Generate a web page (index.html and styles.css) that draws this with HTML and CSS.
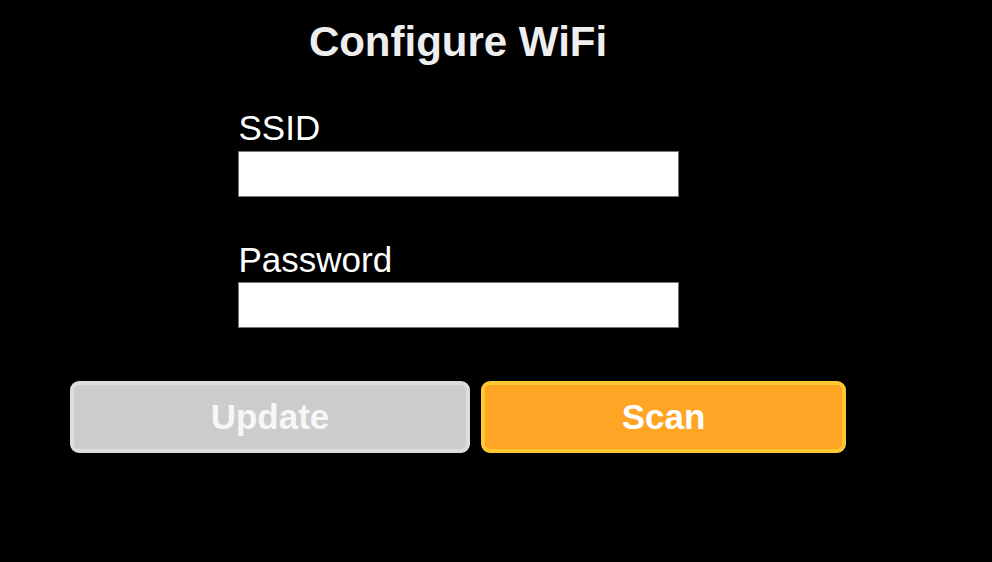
FILE: index.html
```html
<!DOCTYPE html>
<html lang="en">
<head>
<meta charset="utf-8">
<title>Configure WiFi</title>
<link rel="stylesheet" href="styles.css">
</head>
<body>
<main class="page">
  <h1 class="title">Configure WiFi</h1>
  <div class="field field-first">
    <label class="label" for="ssid">SSID</label>
    <input class="input input-ssid" id="ssid" type="text">
  </div>
  <div class="field field-second">
    <label class="label" for="pw">Password</label>
    <input class="input input-pw" id="pw" type="password">
  </div>
  <div class="actions">
    <button class="btn btn-update" type="button">Update</button>
    <button class="btn btn-scan" type="button">Scan</button>
  </div>
</main>
</body>
</html>
```

FILE: styles.css
```css
html, body {
  margin: 0;
  padding: 0;
  background: #000;
}
body {
  width: 992px;
  height: 562px;
  overflow: hidden;
  font-family: "Liberation Sans", Arial, sans-serif;
}
.page {
  width: 916px;
  display: flex;
  flex-direction: column;
  align-items: center;
  padding-top: 18px;
}
.title {
  margin: 0;
  font-size: 42px;
  line-height: 48px;
  font-weight: 700;
  color: #eeeeee;
}
.field {
  display: flex;
  flex-direction: column;
  width: 441px;
}
.field-first { margin-top: 42px; }
.field-second { margin-top: 43px; }
.label {
  font-size: 35px;
  line-height: 40px;
  color: #ffffff;
  padding-left: 1px;
}
.input {
  box-sizing: border-box;
  width: 441px;
  height: 46px;
  margin: 0;
  border: 1px solid #767676;
  background: #ffffff;
  padding: 0 6px;
  font-family: "Liberation Sans", Arial, sans-serif;
  font-size: 20px;
}
.input-ssid { margin-top: 3px; }
.input-pw { margin-top: 2px; }
.actions {
  display: flex;
  gap: 11px;
  margin-top: 53px;
}
.btn {
  box-sizing: border-box;
  height: 72px;
  border-radius: 9px;
  border: 4px solid;
  font-family: "Liberation Sans", Arial, sans-serif;
  font-size: 35px;
  font-weight: 700;
  color: #f7f7f7;
  padding: 0;
  cursor: pointer;
}
.btn-update {
  width: 400px;
  background: #cccccc;
  border-color: #dddddd;
}
.btn-scan {
  width: 365px;
  background: #ffa526;
  border-color: #ffc832;
  color: #ffffff;
}
```
